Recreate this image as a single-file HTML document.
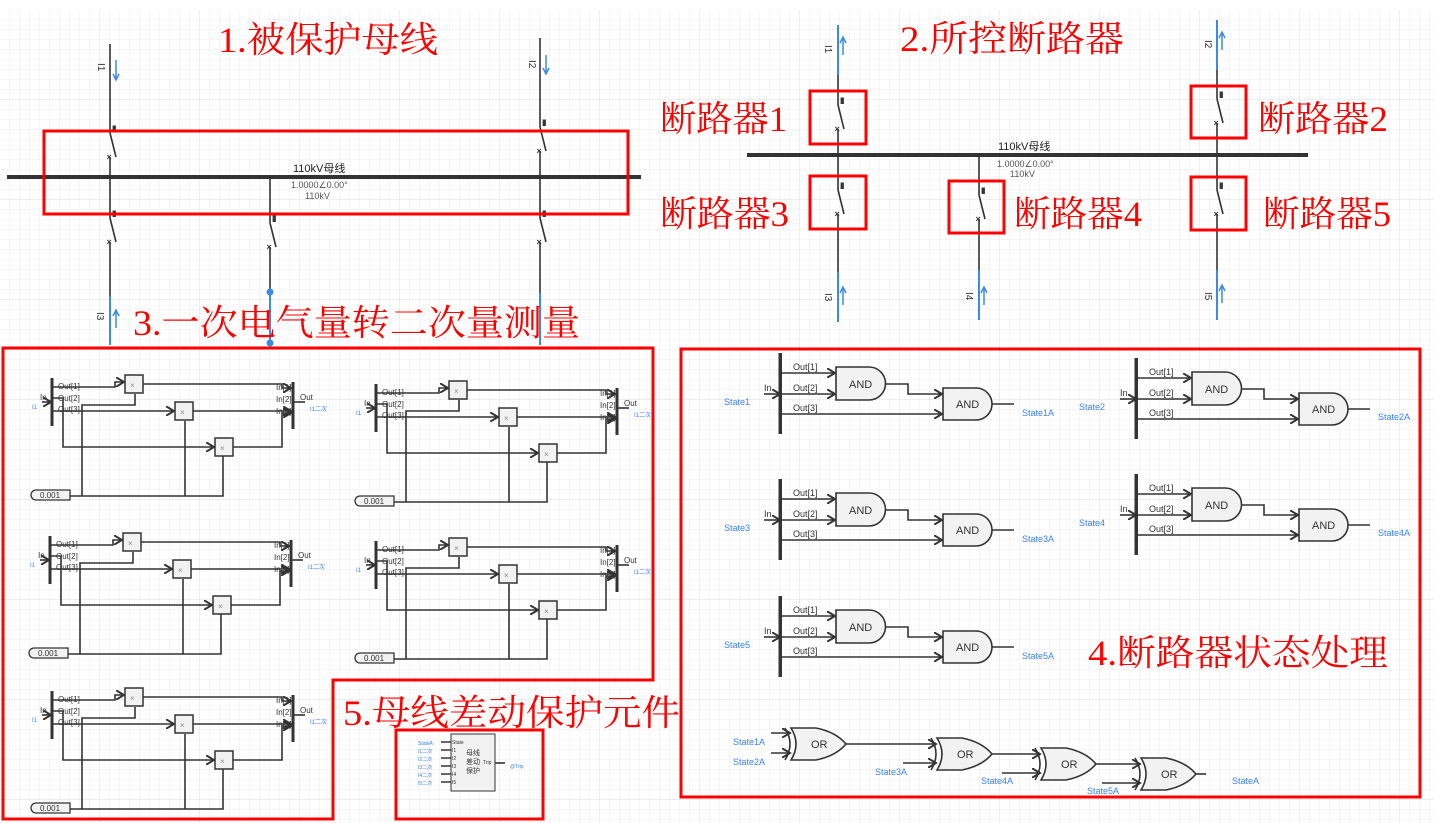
<!DOCTYPE html>
<html><head><meta charset="utf-8"><style>
html,body{margin:0;padding:0;background:#fff;}
svg{display:block;}
.t{font-family:"Liberation Serif","Noto Serif CJK SC",serif;fill:#ff0000;font-size:36px;}
.s{font-family:"Liberation Sans",sans-serif;font-size:8px;fill:#333;}
.b{font-family:"Liberation Sans",sans-serif;font-size:9px;fill:#3b82f6;}
.w{stroke:#333;stroke-width:1.6;fill:none;}
.r{stroke:#f00;stroke-width:3;fill:none;}
</style></head><body>
<svg width="1434" height="823" viewBox="0 0 1434 823" xmlns="http://www.w3.org/2000/svg">
<defs>
<pattern id="g1" width="10" height="10" patternUnits="userSpaceOnUse"><path d="M10 0V10H0" fill="none" stroke="#ececec" stroke-width="1"/></pattern>
<pattern id="g2" width="100" height="100" patternUnits="userSpaceOnUse"><rect width="100" height="100" fill="url(#g1)"/><path d="M100 0V100H0" fill="none" stroke="#dcdcdc" stroke-width="1"/></pattern>
<marker id="ar" markerWidth="6" markerHeight="6" refX="5" refY="3" orient="auto"><path d="M0 0L5 3L0 6" fill="none" stroke="#333" stroke-width="1.2"/></marker>
<g id="mb">
 <rect x="50.5" y="378" width="3" height="48" fill="#333"/>
 <line x1="42" y1="402" x2="51" y2="402" class="w" marker-end="url(#ar)"/>
 <text x="40" y="400" class="s">In</text>
 <text x="58" y="389" class="s">Out[1]</text><text x="58" y="401" class="s">Out[2]</text><text x="58" y="412" class="s">Out[3]</text>
 <text x="32" y="409" class="b" style="font-size:6px">I1</text>
 <path d="M53 387H115V382H124" class="w" marker-end="url(#ar)"/>
 <rect x="125" y="375" width="18" height="18" fill="#f2f2f2" stroke="#333" stroke-width="1.5"/>
 <text x="130" y="388" class="s" style="fill:#888">×</text>
 <path d="M53 411H174" class="w" marker-end="url(#ar)"/>
 <rect x="175" y="402" width="18" height="18" fill="#f2f2f2" stroke="#333" stroke-width="1.5"/>
 <text x="180" y="415" class="s" style="fill:#888">×</text>
 <path d="M53 398H63V447H214" class="w" marker-end="url(#ar)"/>
 <rect x="215" y="438" width="18" height="18" fill="#f2f2f2" stroke="#333" stroke-width="1.5"/>
 <text x="220" y="451" class="s" style="fill:#888">×</text>
 <path d="M143 384H282V388H291" class="w" marker-end="url(#ar)"/>
 <path d="M193 411H291" class="w" marker-end="url(#ar)"/>
 <path d="M233 447H282V413H291" class="w" marker-end="url(#ar)"/>
 <rect x="291.5" y="382" width="3" height="47" fill="#333"/>
 <text x="276" y="390" class="s">In[1]</text><text x="276" y="402" class="s">In[2]</text><text x="276" y="414" class="s">In[3]</text>
 <path d="M294 402H305" class="w"/><text x="300" y="400" class="s">Out</text>
 <text x="310" y="411" class="b" style="font-size:6px">I1二次</text>
 <path d="M36 490H70V500H36A5 5 0 0 1 36 490Z" fill="#f2f2f2" stroke="#333" stroke-width="1.3"/>
 <text x="40" y="498" class="s">0.001</text>
 <path d="M70 496H223V456" class="w"/>
 <path d="M82 496V405H135V394" class="w"/>
 <path d="M185 496V421" class="w"/>
</g>
<g id="ag">
 <rect x="778.5" y="353" width="3.5" height="81" fill="#333"/>
 <path d="M764 394H780" class="w" marker-end="url(#ar)"/>
 <text x="764" y="391" class="s" style="font-size:9px">In</text>
 <text x="793" y="370" class="s" style="font-size:9px">Out[1]</text>
 <text x="793" y="391" class="s" style="font-size:9px">Out[2]</text>
 <text x="793" y="411" class="s" style="font-size:9px">Out[3]</text>
 <path d="M782 373H835" class="w" marker-end="url(#ar)"/>
 <path d="M782 394H835" class="w" marker-end="url(#ar)"/>
 <path d="M782 414H942" class="w" marker-end="url(#ar)"/>
 <path d="M836 367H869A16.5 16.5 0 0 1 869 400H836Z" fill="#f2f2f2" stroke="#333" stroke-width="1.6"/>
 <text x="849" y="388" class="s" style="font-size:11px">AND</text>
 <path d="M886 384H908V394H942" class="w" marker-end="url(#ar)"/>
 <path d="M943 388H976A16 16 0 0 1 976 420H943Z" fill="#f2f2f2" stroke="#333" stroke-width="1.6"/>
 <text x="956" y="408" class="s" style="font-size:11px">AND</text>
 <path d="M992 404H1014" class="w"/>
</g>
<g id="org">
 <path d="M0 0Q10 16 0 32H25Q45 28 55 16Q45 4 25 0Z" fill="#f2f2f2" stroke="#333" stroke-width="1.6"/>
 <path d="M-6 0Q4 16 -6 32" fill="none" stroke="#333" stroke-width="1.6"/>
 <text x="20" y="20" class="s" style="font-size:11px">OR</text>
</g>
<g id="brk">
 <path d="M0 0L6 24" stroke="#333" stroke-width="1.6"/>
 <text x="-3.5" y="27" class="s" style="font-size:9px;font-weight:bold">×</text>
 <text x="2" y="-1" class="s" style="font-size:9px;font-weight:bold;letter-spacing:-1.5px">III</text>
</g>
</defs>
<rect x="0" y="10" width="1434" height="813" fill="url(#g2)"/>

<!-- Panel 1 -->
<rect x="7" y="175" width="634" height="4" fill="#333"/>
<path d="M110 44V133M110 157V218M110 242V296" class="w"/>
<path d="M110 296V345" stroke="#3b8ae6" stroke-width="2"/>
<use href="#brk" transform="translate(110,133)"/>
<use href="#brk" transform="translate(110,218)"/>
<path d="M540 38V127M540 151V218M540 242V293" class="w"/>
<path d="M540 293V345" stroke="#3b8ae6" stroke-width="2"/>
<use href="#brk" transform="translate(540,127)"/>
<use href="#brk" transform="translate(540,218)"/>
<path d="M270 177V223M270 247V290" class="w"/>
<path d="M270 290V345" stroke="#3b8ae6" stroke-width="2"/>
<circle cx="270" cy="292" r="3.5" fill="#3b8ae6"/><circle cx="270" cy="343" r="3.5" fill="#3b8ae6"/>
<use href="#brk" transform="translate(270,223)"/>
<path d="M116 60V78M113 74L116 80L119 74" stroke="#3b8ae6" stroke-width="1.5" fill="none"/>
<path d="M546 55V72M543 68L546 74L549 68" stroke="#3b8ae6" stroke-width="1.5" fill="none"/>
<path d="M116 328V311M113 316L116 310L119 316" stroke="#3b8ae6" stroke-width="1.5" fill="none"/>
<text transform="translate(98,63) rotate(90)" class="s" style="font-size:10px">I1</text>
<text transform="translate(529,60) rotate(90)" class="s" style="font-size:10px">I2</text>
<text transform="translate(97,312) rotate(90)" class="s" style="font-size:10px">I3</text>
<text x="293" y="172" class="s" style="font-size:11px;fill:#222">110kV母线</text>
<text x="291" y="188" class="s" style="font-size:9px;fill:#555">1.0000∠0.00°</text>
<text x="305" y="199" class="s" style="font-size:9px;fill:#555">110kV</text>
<rect x="44" y="131" width="584" height="83" class="r"/>
<text x="218" y="52" class="t" textLength="220" lengthAdjust="spacingAndGlyphs">1.被保护母线</text>

<!-- Panel 2 -->
<rect x="747" y="153" width="561" height="4" fill="#333"/>
<path d="M838 75V105M838 129V190M838 214V272M979 155V195M979 219V270M1217 70V99M1217 123V190M1217 214V270" class="w"/>
<path d="M838 25V75M838 272V322M979 270V320M1217 20V70M1217 270V320" stroke="#3b8ae6" stroke-width="2"/>
<use href="#brk" transform="translate(838,105)"/>
<use href="#brk" transform="translate(1217,99)"/>
<use href="#brk" transform="translate(838,190)"/>
<use href="#brk" transform="translate(979,195)"/>
<use href="#brk" transform="translate(1217,190)"/>
<g stroke="#3b8ae6" stroke-width="1.5" fill="none">
<path d="M843 55V38M840 43L843 37L846 43"/><path d="M1222 50V33M1219 38L1222 32L1225 38"/>
<path d="M843 305V288M840 293L843 287L846 293"/><path d="M984 305V288M981 293L984 287L987 293"/><path d="M1222 303V286M1219 291L1222 285L1225 291"/>
</g>
<text transform="translate(825,45) rotate(90)" class="s" style="font-size:10px">I1</text>
<text transform="translate(1205,40) rotate(90)" class="s" style="font-size:10px">I2</text>
<text transform="translate(825,293) rotate(90)" class="s" style="font-size:10px">I3</text>
<text transform="translate(966,292) rotate(90)" class="s" style="font-size:10px">I4</text>
<text transform="translate(1205,292) rotate(90)" class="s" style="font-size:10px">I5</text>
<text x="998" y="150" class="s" style="font-size:11px;fill:#222">110kV母线</text>
<text x="997" y="167" class="s" style="font-size:9px;fill:#555">1.0000∠0.00°</text>
<text x="1010" y="177" class="s" style="font-size:9px;fill:#555">110kV</text>
<rect x="810" y="91" width="56" height="53" class="r"/>
<rect x="1191" y="86" width="55" height="52" class="r"/>
<rect x="810" y="176" width="56" height="53" class="r"/>
<rect x="949" y="181" width="55" height="52" class="r"/>
<rect x="1191" y="177" width="55" height="53" class="r"/>
<text x="900" y="51" class="t" textLength="224" lengthAdjust="spacingAndGlyphs">2.所控断路器</text>
<text x="660" y="131" class="t" textLength="127" lengthAdjust="spacingAndGlyphs">断路器1</text>
<text x="1258" y="131" class="t" textLength="130" lengthAdjust="spacingAndGlyphs">断路器2</text>
<text x="660" y="226" class="t" textLength="129" lengthAdjust="spacingAndGlyphs">断路器3</text>
<text x="1014" y="226" class="t" textLength="128" lengthAdjust="spacingAndGlyphs">断路器4</text>
<text x="1263" y="226" class="t" textLength="128" lengthAdjust="spacingAndGlyphs">断路器5</text>

<!-- Panel 3 -->
<text x="133" y="335" class="t" textLength="447" lengthAdjust="spacingAndGlyphs">3.一次电气量转二次量测量</text>
<use href="#mb"/>
<use href="#mb" transform="translate(324,6)"/>
<use href="#mb" transform="translate(-2,158)"/>
<use href="#mb" transform="translate(324,163)"/>
<use href="#mb" transform="translate(0,313)"/>
<path d="M3 348H653V680H333V819H3Z" class="r"/>

<!-- Panel 5 -->
<text x="343" y="725" class="t" textLength="337" lengthAdjust="spacingAndGlyphs">5.母线差动保护元件</text>
<rect x="396" y="730" width="147" height="89" class="r"/>
<rect x="451" y="734" width="44" height="57" fill="#f2f2f2" stroke="#333" stroke-width="1"/>
<g class="w" stroke-width="1.2">
<path d="M441 742H451M441 750H451M441 758H451M441 766H451M441 774H451M441 782H451"/>
<path d="M495 763H505"/>
</g>
<g class="s" style="font-size:5px">
<text x="452" y="744">State</text><text x="452" y="752">I1</text><text x="452" y="760">I2</text><text x="452" y="768">I3</text><text x="452" y="776">I4</text><text x="452" y="784">I5</text>
<text x="483" y="764">Trip</text>
<text x="466" y="755" style="font-size:7px">母线</text><text x="466" y="764" style="font-size:7px">差动</text><text x="466" y="773" style="font-size:7px">保护</text>
</g>
<g class="b" style="font-size:5px"><text x="418" y="745">StateA</text><text x="418" y="753">I1二次</text><text x="418" y="761">I2二次</text><text x="418" y="769">I3二次</text><text x="418" y="777">I4二次</text><text x="418" y="785">I5二次</text><text x="510" y="768">@Trip</text></g>

<!-- Panel 4 -->
<use href="#ag"/>
<use href="#ag" transform="translate(356,5)"/>
<use href="#ag" transform="translate(0,126)"/>
<use href="#ag" transform="translate(356,121)"/>
<use href="#ag" transform="translate(0,243)"/>
<g class="b">
<text x="724" y="405">State1</text><text x="1022" y="416">State1A</text>
<text x="1079" y="410">State2</text><text x="1378" y="420">State2A</text>
<text x="724" y="531">State3</text><text x="1022" y="542">State3A</text>
<text x="1079" y="526">State4</text><text x="1378" y="536">State4A</text>
<text x="724" y="648">State5</text><text x="1022" y="659">State5A</text>
</g>
<text x="1088" y="665" class="t" textLength="300" lengthAdjust="spacingAndGlyphs">4.断路器状态处理</text>
<use href="#org" transform="translate(791,728)"/>
<use href="#org" transform="translate(937,738)"/>
<use href="#org" transform="translate(1041,748)"/>
<use href="#org" transform="translate(1141,758)"/>
<g class="w">
<path d="M771 733H790" marker-end="url(#ar)"/><path d="M771 753H790" marker-end="url(#ar)"/>
<path d="M846 744H936" marker-end="url(#ar)"/><path d="M903 763H936" marker-end="url(#ar)"/>
<path d="M992 754H1040" marker-end="url(#ar)"/><path d="M1002 773H1040" marker-end="url(#ar)"/>
<path d="M1096 764H1140" marker-end="url(#ar)"/><path d="M1102 783H1140" marker-end="url(#ar)"/>
<path d="M1196 774H1206"/>
</g>
<g class="b"><text x="733" y="745">State1A</text><text x="733" y="765">State2A</text><text x="875" y="775">State3A</text><text x="981" y="784">State4A</text><text x="1087" y="794">State5A</text><text x="1232" y="784">StateA</text></g>
<rect x="681" y="349" width="739" height="448" class="r"/>
</svg>
</body></html>
